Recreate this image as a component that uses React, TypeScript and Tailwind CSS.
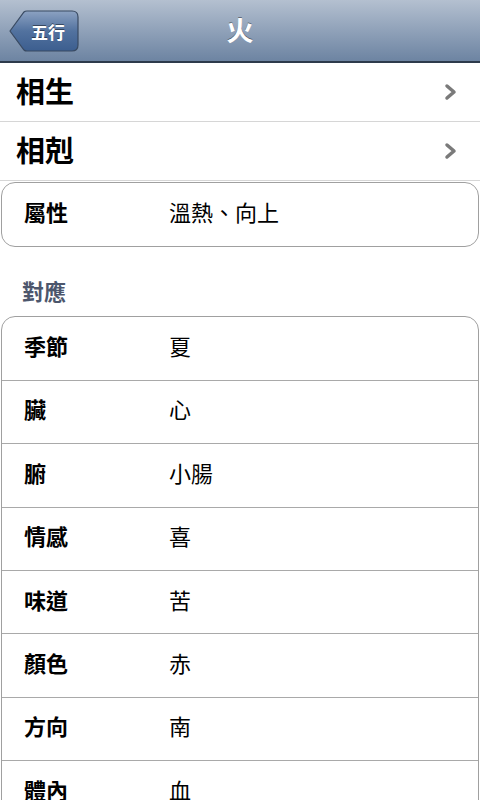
const font = { fontFamily: '"Noto Sans CJK TC", "Noto Sans", sans-serif' };

const rows: [string, string][] = [
  ['季節', '夏'],
  ['臟', '心'],
  ['腑', '小腸'],
  ['情感', '喜'],
  ['味道', '苦'],
  ['顏色', '赤'],
  ['方向', '南'],
  ['體內', '血'],
];

function Chevron() {
  return (
    <svg width="14" height="18" viewBox="0 0 14 18" className="mr-[22px]">
      <path d="M3 3 L10 9 L3 15" fill="none" stroke="#7a7a7a" strokeWidth="3.5" strokeLinecap="round" strokeLinejoin="round" />
    </svg>
  );
}

function NavRow({ label }: { label: string }) {
  return (
    <div className="flex h-[59px] items-center justify-between border-b border-[#d6d6d6] bg-white pl-4">
      <span className="pb-[4px] text-[29px] font-bold leading-none text-black">{label}</span>
      <Chevron />
    </div>
  );
}

function InfoRow({ label, value, last }: { label: string; value: string; last?: boolean }) {
  return (
    <div className={`flex h-[63.4px] items-center pb-[7px] ${last ? '' : 'border-b border-[#a9a9a9]'}`}>
      <span className="w-[167px] pl-[22px] text-[22px] font-bold leading-none text-black">{label}</span>
      <span className="text-[22px] leading-none text-black">{value}</span>
    </div>
  );
}

export default function App() {
  return (
    <div className="h-[800px] w-[480px] overflow-hidden bg-white" style={font}>
      <div className="relative flex h-[63px] items-center justify-center border-b-2 border-[#2d3a4c] bg-gradient-to-b from-[#b4c0d0] to-[#6d84a2]">
        <div className="absolute left-[9px] top-[10px] flex h-[42px] items-center">
          <svg width="70" height="42" viewBox="0 0 70 42" className="absolute left-0 top-0">
            <defs>
              <linearGradient id="bk" x1="0" y1="0" x2="0" y2="1">
                <stop offset="0" stopColor="#8ca2c2" />
                <stop offset="0.5" stopColor="#52729f" />
                <stop offset="1" stopColor="#3c5e8f" />
              </linearGradient>
            </defs>
            <path d="M1 21 L15 2 Q16 1 18 1 L63 1 Q69 1 69 7 L69 35 Q69 41 63 41 L18 41 Q16 41 15 40 Z" fill="url(#bk)" stroke="#394a62" strokeWidth="1.2" />
          </svg>
          <span className="relative pl-[22px] text-[17px] font-bold leading-none text-white [text-shadow:0_-1px_0_rgba(0,0,0,0.45)]">五行</span>
        </div>
        <span className="pb-[2px] text-[27px] font-bold leading-none text-white [text-shadow:0_-1px_0_rgba(0,0,0,0.4)]">火</span>
      </div>

      <NavRow label="相生" />
      <NavRow label="相剋" />

      <div className="mx-[1px] mt-[1px] overflow-hidden rounded-[14px] border-[1.5px] border-[#a0a0a0] bg-white">
        <InfoRow label="屬性" value="溫熱、向上" last />
      </div>

      <div className="pl-[22px] pt-[30px] pb-[13px] text-[22px] font-bold leading-[26px] text-[#4c566c] [text-shadow:0_1px_0_#fff]">對應</div>

      <div className="mx-[1px] overflow-hidden rounded-[14px] border-[1.5px] border-[#a0a0a0] bg-white">
        {rows.map(([l, v], i) => (
          <InfoRow key={l} label={l} value={v} last={i === rows.length - 1} />
        ))}
      </div>
    </div>
  );
}
